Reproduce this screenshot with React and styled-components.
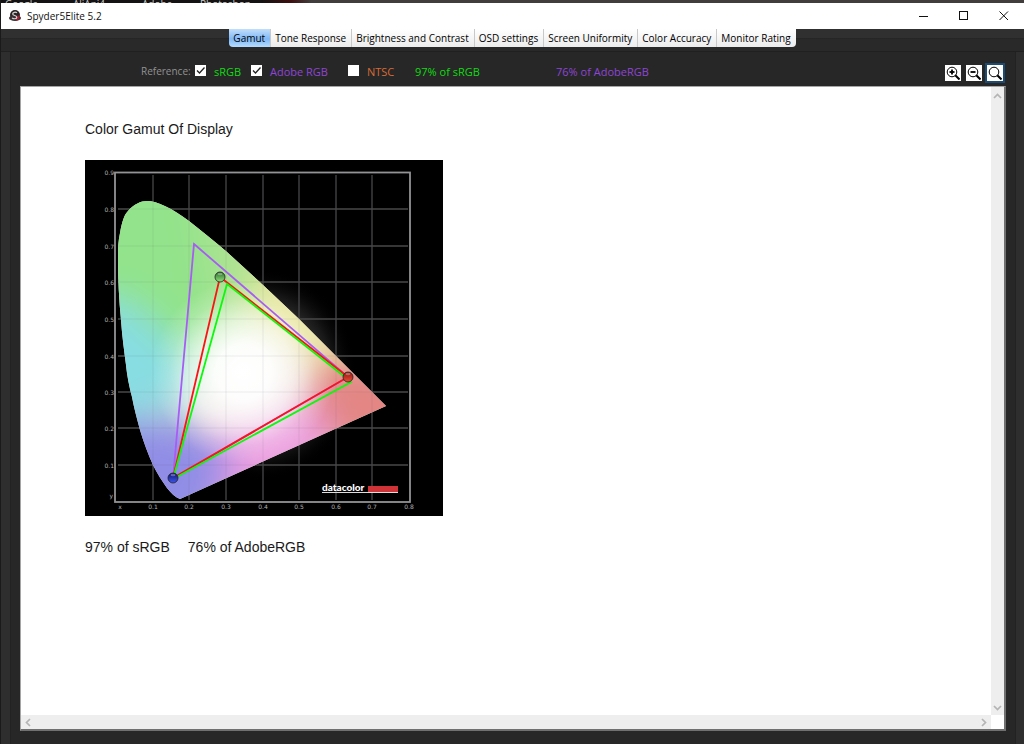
import React, { useState } from 'react'
import styled, { createGlobalStyle } from 'styled-components'

const tabs = [
  'Gamut',
  'Tone Response',
  'Brightness and Contrast',
  'OSD settings',
  'Screen Uniformity',
  'Color Accuracy',
  'Monitor Rating',
]

const gridX = [68, 104, 141, 178, 214, 251, 287]
const gridY = [49, 86, 122, 159, 196, 232, 268, 305]

const locus =
  'M62 41 C72 41 87 48 104 61 C117 71 130 82 142 92 L178 125 L214 159 L251 196 L301 246 L95 339 C90 337 86 333 82 328 C77 321 72 313 68 305 C63 294 59 283 55 270 C52 259 49 248 47 237 C44 226 42 215 41 205 C39 190 37 175 36 160 C34 140 33 120 33 100 C33 90 33 82 35 73 C37 62 39 55 43 51 C49 44 56 41 62 41 Z'

const Grid = () => (
  <>
    {gridX.map((x) => <path key={x} d={`M${x} 15V340`} />)}
    {gridY.map((y) => <path key={y} d={`M33 ${y}H323`} />)}
  </>
)

const GamutChart = () => (
  <Chart viewBox="0 0 358 356" role="img" aria-label="Color gamut chart">
    <defs>
      <clipPath id="locus"><path d={locus} /></clipPath>
      <filter id="soft" x="-20%" y="-20%" width="140%" height="140%">
        <feGaussianBlur stdDeviation="18" />
      </filter>
      <radialGradient id="white">
        <stop offset="0" stopColor="#fff" />
        <stop offset="0.3" stopColor="#fff" stopOpacity="0.95" />
        <stop offset="0.55" stopColor="#fff" stopOpacity="0.65" />
        <stop offset="0.8" stopColor="#fff" stopOpacity="0.2" />
        <stop offset="1" stopColor="#fff" stopOpacity="0" />
      </radialGradient>
      <radialGradient id="glow">
        <stop offset="0.5" stopColor="#777" stopOpacity="0.6" />
        <stop offset="0.75" stopColor="#444" stopOpacity="0.35" />
        <stop offset="1" stopColor="#000" stopOpacity="0" />
      </radialGradient>
      <linearGradient id="ballGreen" x2="0" y2="1">
        <stop offset="0" stopColor="#2c6b2c" />
        <stop offset="1" stopColor="#8fe47a" />
      </linearGradient>
      <linearGradient id="ballRed" x2="0" y2="1">
        <stop offset="0" stopColor="#8c1712" />
        <stop offset="1" stopColor="#f04a34" />
      </linearGradient>
      <linearGradient id="ballBlue" x2="0" y2="1">
        <stop offset="0" stopColor="#10126e" />
        <stop offset="1" stopColor="#3e58f0" />
      </linearGradient>
    </defs>

    <rect width="358" height="356" fill="#000" />
    <ellipse cx="174" cy="214" rx="98" ry="106" fill="url(#glow)" />
    <g stroke="#48484a" strokeWidth="1.3"><Grid /></g>

    <g clipPath="url(#locus)">
      <rect width="358" height="356" fill="#e6dcd0" />
      <g filter="url(#soft)">
        <path d="M-60 -60H130L175 115L145 225L90 205L30 140H-60Z" fill="#92e38b" />
        <path d="M100 -30L215 110L200 170L140 205Z" fill="#ace393" />
        <path d="M185 80L270 180L225 205L160 170Z" fill="#e8e69c" />
        <path d="M235 195L360 200V320L240 285L212 235Z" fill="#e38684" />
        <path d="M130 262L225 240L250 290L140 370Z" fill="#ec9fe0" />
        <path d="M-60 145L40 140L100 195L110 240L30 262H-60Z" fill="#87dde2" />
        <path d="M10 262L100 258L150 295L120 390H10Z" fill="#908de6" />
      </g>
      <ellipse cx="158" cy="212" rx="92" ry="92" fill="url(#white)" />
      <g stroke="#556" strokeOpacity="0.1"><Grid /></g>
    </g>

    <rect x="30" y="12.5" width="295" height="329.5" fill="none" stroke="#939396" strokeWidth="1.8" />

    <g fill="none" strokeWidth="1.8">
      <path d="M109 84L263 217L88 318Z" stroke="#a95cf5" />
      <path d="M135 117L263 217L88 318Z" stroke="#fb1414" />
      <path d="M142 124L260 217L266 222L88 319Z" stroke="#0cf80c" />
    </g>
    <g stroke="#222" strokeOpacity="0.8">
      <circle cx="135" cy="117" r="5" fill="url(#ballGreen)" />
      <circle cx="263" cy="217" r="5" fill="url(#ballRed)" />
      <circle cx="88" cy="318" r="5" fill="url(#ballBlue)" />
    </g>
    <g fill="#fff" fillOpacity="0.3">
      <ellipse cx="135" cy="114" rx="2.5" ry="1.3" />
      <ellipse cx="263" cy="214" rx="2.5" ry="1.3" />
      <ellipse cx="88" cy="315" rx="2.5" ry="1.3" />
    </g>

    <AxisLabel x="29" y="15" textAnchor="end">0.9</AxisLabel>
    {gridY.map((y, i) => (
      <AxisLabel key={y} x="29" y={y + 3} textAnchor="end">{`0.${8 - i}`}</AxisLabel>
    ))}
    <AxisLabel x="28" y="338" textAnchor="end">y</AxisLabel>
    <AxisLabel x="35" y="349" textAnchor="middle">x</AxisLabel>
    {gridX.map((x, i) => (
      <AxisLabel key={x} x={x} y="349" textAnchor="middle">{`0.${i + 1}`}</AxisLabel>
    ))}
    <AxisLabel x="324" y="349" textAnchor="middle">0.8</AxisLabel>

    <Brand x="237" y="331">datacolor</Brand>
    <rect x="283" y="326" width="30" height="6" fill="#cf3338" />
    <rect x="237" y="332" width="76" height="1" fill="#ddd" />
  </Chart>
)

const Magnifier = ({ sign }) => (
  <svg width="14" height="14" viewBox="0 0 14 14" fill="none" stroke="#000">
    <circle cx="6" cy="6" r="4.8" />
    <path d="M9.3 9.3L13.5 13.5" strokeWidth="2" />
    {sign && <path d="M3.5 6H8.5" strokeWidth="1.8" />}
    {sign === '+' && <path d="M6 3.5V8.5" strokeWidth="1.8" />}
  </svg>
)

const Arrow = ({ d }) => (
  <svg width="9" height="9" viewBox="0 0 9 9" fill="none" stroke="#b4b4b4" strokeWidth="1.7">
    <path d={d} />
  </svg>
)

const Logo = () => (
  <svg width="12" height="12" viewBox="0 0 12 12" aria-hidden="true">
    <circle cx="6" cy="5" r="5" fill="#292323" />
    <ellipse cx="6" cy="8" rx="6" ry="3" fill="#383033" />
    <path d="M7 7L11 5L10 9L7 11Z" fill="#a81d32" />
    <path d="M8 2.8C6.5 1.8 3.6 2.1 3.7 4C3.8 5.8 7.8 5.2 7.8 7.2C7.8 9 5 9.2 3 8" fill="none" stroke="#d6d2d2" strokeWidth="1.2" />
  </svg>
)

const App = () => {
  const [active, setActive] = useState('Gamut')
  const [refs, setRefs] = useState({ srgb: true, adobe: true, ntsc: false })

  const toggle = (name) => setRefs({ ...refs, [name]: !refs[name] })

  return (
    <>
      <GlobalStyle />
      <Desktop>
        <Taskbar>
          <span>Google</span>
          <span>AliApi4</span>
          <span>Adobe</span>
          <span>Photoshop</span>
        </Taskbar>
        <Window>
          <TitleBar>
            <Logo />
            <Title>Spyder5Elite 5.2</Title>
            <WindowButton aria-label="Minimize">
              <svg width="10" height="10" stroke="#111"><path d="M0 5.5H9" /></svg>
            </WindowButton>
            <WindowButton aria-label="Maximize">
              <svg width="10" height="10" stroke="#111" fill="none"><rect x="0.5" y="0.5" width="8" height="8" /></svg>
            </WindowButton>
            <WindowButton aria-label="Close">
              <svg width="10" height="10" stroke="#111"><path d="M0.5 0.5L9 9M9 0.5L0.5 9" /></svg>
            </WindowButton>
          </TitleBar>

          <TabStrip>
            <Tabs role="tablist">
              {tabs.map((tab) => (
                <Tab key={tab} role="tab" aria-selected={tab === active} $active={tab === active} onClick={() => setActive(tab)}>
                  {tab}
                </Tab>
              ))}
            </Tabs>
          </TabStrip>

          <Frame>
            <Panel>
              <Toolbar>
                <Reference>Reference:</Reference>
                <Check $color="#0fdc0f" $width="56px">
                  <input type="checkbox" checked={refs.srgb} onChange={() => toggle('srgb')} />
                  sRGB
                </Check>
                <Check $color="#8f45d6" $width="97px">
                  <input type="checkbox" checked={refs.adobe} onChange={() => toggle('adobe')} />
                  Adobe RGB
                </Check>
                <Check $color="#d96a35" $width="67px">
                  <input type="checkbox" checked={refs.ntsc} onChange={() => toggle('ntsc')} />
                  NTSC
                </Check>
                <Result $color="#0fdc0f">97% of sRGB</Result>
                <Result $color="#8f45d6">76% of AdobeRGB</Result>
                <ZoomGroup>
                  <ZoomButton aria-label="Zoom in"><Magnifier sign="+" /></ZoomButton>
                  <ZoomButton aria-label="Zoom out"><Magnifier sign="-" /></ZoomButton>
                  <ZoomButton aria-label="Zoom to fit" $focused><Magnifier /></ZoomButton>
                </ZoomGroup>
              </Toolbar>

              <Viewer>
                <Report>
                  <Heading>Color Gamut Of Display</Heading>
                  <GamutChart />
                  <Summary>
                    <span>97% of sRGB</span>
                    <span>76% of AdobeRGB</span>
                  </Summary>
                </Report>
                <VerticalBar>
                  <Arrow d="M1 6L4.5 2.5L8 6" />
                  <Arrow d="M1 3L4.5 6.5L8 3" />
                </VerticalBar>
                <HorizontalBar>
                  <Arrow d="M6 1L2.5 4.5L6 8" />
                  <Arrow d="M3 1L6.5 4.5L3 8" />
                </HorizontalBar>
              </Viewer>
            </Panel>
          </Frame>
        </Window>
      </Desktop>
    </>
  )
}

const GlobalStyle = createGlobalStyle`
  * {
    box-sizing: border-box;
  }
  body {
    margin: 0;
    background: #282828;
    font-family: "Open Sans", "Noto Sans", sans-serif;
    font-size: 11px;
  }
  button {
    font: inherit;
    border: 0;
    padding: 0;
  }
`
const Desktop = styled.div`
  display: flex;
  flex-direction: column;
  min-height: 100vh;
  padding-left: 1px;
  background: #1a1a1a;
`
const Taskbar = styled.div`
  display: grid;
  grid-template-columns: 68px 69px 58px auto;
  align-items: end;
  height: 3px;
  padding-left: 4px;
  overflow: hidden;
  background: linear-gradient(90deg, #141212 260px, #3c0f0f 290px, #403d3c 310px);
  color: #ccc;
  font-size: 10px;
  line-height: 8px;
`
const Window = styled.div`
  flex: 1;
  display: flex;
  flex-direction: column;
  background: #303030;
`
const TitleBar = styled.header`
  display: flex;
  align-items: center;
  height: 26px;
  padding-left: 8px;
  background: #fff;
  color: #111;
`
const Title = styled.h1`
  flex: 1;
  margin: 0 0 0 6px;
  font-size: 10px;
  font-weight: 400;
`
const WindowButton = styled.button`
  display: flex;
  align-items: center;
  justify-content: center;
  width: 40px;
  height: 26px;
  background: none;
`
const TabStrip = styled.nav`
  display: flex;
  justify-content: center;
  height: 23px;
  background: linear-gradient(#303030 9px, #222 9px, #292929 10px);
  border-bottom: 1px solid #202020;
`
const Tabs = styled.div`
  display: flex;
  height: 18px;
  border-radius: 0 0 4px 4px;
  overflow: hidden;
`
const Tab = styled.button`
  padding: 0 5px 0 4px;
  border-right: 1px solid #c9c9c9;
  background: ${(props) => (props.$active ? 'linear-gradient(#c3defb, #7fb9f8 55%, #b5dcff)' : 'linear-gradient(#fff, #ececec)')};
  color: #000;
  font-size: 10px;
  line-height: 18px;
  white-space: nowrap;

  &:last-child {
    border-right: 0;
  }
`
const Frame = styled.main`
  flex: 1;
  display: flex;
  padding: 0 8px 0 9px;
  background: #2e2e2e;
`
const Panel = styled.section`
  flex: 1;
  display: flex;
  flex-direction: column;
  padding: 0 9px 13px;
  border: solid #222;
  border-width: 0 1px;
  background: #272727;
`
const Toolbar = styled.div`
  display: flex;
  align-items: center;
  height: 34px;
  padding: 4px 0 0 121px;
`
const Reference = styled.span`
  width: 54px;
  color: #929292;
  font-size: 10px;
`
const Check = styled.label`
  display: flex;
  align-items: center;
  gap: 8px;
  width: ${(props) => props.$width};
  color: ${(props) => props.$color};
  white-space: nowrap;

  input {
    appearance: none;
    width: 11px;
    height: 11px;
    margin: 0 0 2px;
    background: #fff;
  }
  input:checked {
    background: #fff url("data:image/svg+xml,%3Csvg xmlns='http://www.w3.org/2000/svg' viewBox='0 0 11 11'%3E%3Cpath d='M2 5.5L4.5 8L9.5 2.5' fill='none' stroke='%23222' stroke-width='1.3'/%3E%3C/svg%3E");
  }
`
const Result = styled.span`
  width: 141px;
  color: ${(props) => props.$color};
`
const ZoomGroup = styled.div`
  display: flex;
  align-items: center;
  gap: 1px;
  margin: 4px 1px 0 auto;
`
const ZoomButton = styled.button`
  display: flex;
  align-items: center;
  justify-content: center;
  width: 20px;
  height: 20px;
  border: 2px solid ${(props) => (props.$focused ? '#1d4a70' : 'transparent')};
  background: #fff;
  background-clip: padding-box;
`
const Viewer = styled.div`
  flex: 1;
  display: grid;
  grid-template-columns: 1fr 13px;
  grid-template-rows: 1fr 14px;
  border: 1px solid #a5a5a5;
  border-right: 2px solid #707070;
  border-bottom: 2px solid #707070;
  background: #fff;
`
const Report = styled.article`
  padding: 33px 64px;
  color: #1a1a1a;
  font-family: "Liberation Sans", Arial, sans-serif;
  font-size: 14px;
`
const Heading = styled.h2`
  margin: 0 0 22px;
  font-size: 14px;
  font-weight: 400;
  line-height: 18px;
`
const Chart = styled.svg`
  display: block;
  width: 358px;
  max-width: 100%;
`
const AxisLabel = styled.text`
  fill: #b0b0b0;
  font-family: "DejaVu Sans", sans-serif;
  font-size: 6px;
`
const Brand = styled.text`
  fill: #fff;
  font-family: Lato, sans-serif;
  font-size: 10px;
  font-weight: 900;
`
const Summary = styled.p`
  display: flex;
  gap: 18px;
  margin: 22px 0 0;
  line-height: 18px;
`
const VerticalBar = styled.div`
  display: flex;
  flex-direction: column;
  align-items: center;
  justify-content: space-between;
  padding: 5px 0 3px;
  background: #eee;
`
const HorizontalBar = styled.div`
  display: flex;
  align-items: center;
  justify-content: space-between;
  padding: 0 3px;
  background: #eee;
`

export default App
